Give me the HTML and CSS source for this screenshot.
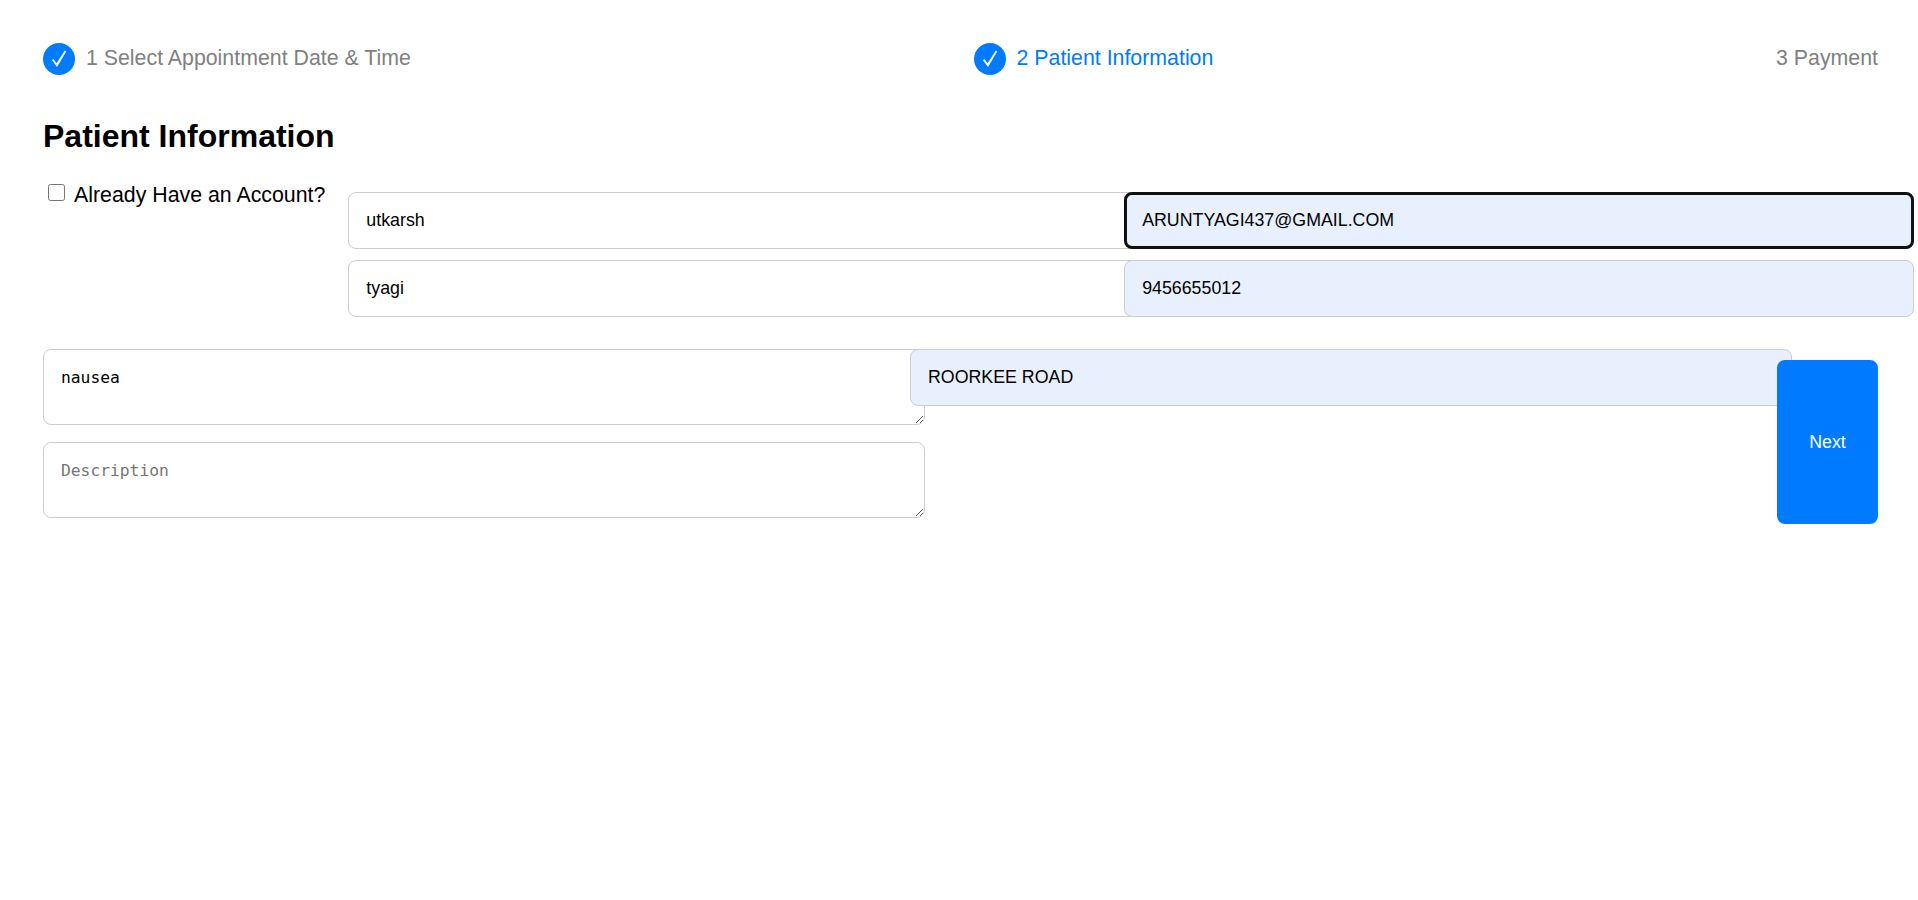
FILE: index.html
```html
<!DOCTYPE html>
<html>
<head>
    <title>Patient Information</title>
    <link rel="stylesheet" href="styles.css">
</head>
<body>
    <div class="steps">
        <div class="step">
            <span class="step-icon">
                <svg viewBox="0 0 32 32" width="32" height="32"><path d="M9 17.2 L10.4 16 L13.6 20.2 L21.8 7.6 L23.2 8.4 L14 24 Z" fill="#fff"/></svg>
            </span>
            <span class="step-label">1 Select Appointment Date &amp; Time</span>
        </div>
        <div class="step active">
            <span class="step-icon">
                <svg viewBox="0 0 32 32" width="32" height="32"><path d="M9 17.2 L10.4 16 L13.6 20.2 L21.8 7.6 L23.2 8.4 L14 24 Z" fill="#fff"/></svg>
            </span>
            <span class="step-label">2 Patient Information</span>
        </div>
        <div class="step"><span class="step-label">3 Payment</span></div>
    </div>

    <h2>Patient Information</h2>

    <form>
        <div class="account-row">
            <label class="account-check"><input type="checkbox"> <span class="account-text">Already Have an Account?</span></label>
            <div class="contact-grid">
                <input class="field" type="text" value="utkarsh" placeholder="First Name">
                <input class="field filled focused" type="text" value="ARUNTYAGI437@GMAIL.COM" placeholder="Email">
                <input class="field" type="text" value="tyagi" placeholder="Last Name">
                <input class="field filled" type="text" value="9456655012" placeholder="Phone">
            </div>
        </div>

        <div class="details-row">
            <div class="details-col">
                <textarea class="field note" placeholder="Reason">nausea</textarea>
                <textarea class="field note" placeholder="Description"></textarea>
            </div>
            <div>
                <input class="field filled" type="text" value="ROORKEE ROAD" placeholder="Address">
            </div>
            <button class="next" type="button">Next</button>
        </div>
    </form>
</body>
</html>
```

FILE: styles.css
```css
body { margin: 0; padding: 43px 40px 0 43px; font-family: "Liberation Sans", Arial, sans-serif; background: #fff; color: #000; }

.steps { display: flex; justify-content: space-between; align-items: center; height: 32px; }
.step { display: flex; align-items: center; gap: 11px; font-size: 21.33px; color: #808080; }
.step.active { color: #007bff; }
.step-label { margin-top: -2px; }
.step-icon { display: block; width: 32px; height: 32px; border-radius: 50%; background: #007bff; }
.step-icon svg { display: block; }

h2 { margin: 43px 0 0; font-size: 32px; line-height: 37px; font-weight: bold; }

.account-row { display: flex; align-items: flex-start; gap: 23px; margin-top: 27px; }
.account-check { display: flex; align-items: flex-start; gap: 9px; padding: 0 0 0 5px; font-size: 21.33px; line-height: 24px; white-space: nowrap; }
.account-check input { width: 17px; height: 17px; margin: 2px 0 0; }
.account-text { margin-top: 1px; }
.contact-grid { flex: 1; display: grid; grid-template-columns: 1fr 1fr; column-gap: 22px; row-gap: 11px; margin-top: 10px; }

.field { display: block; box-sizing: content-box; width: 100%; margin: 0; padding: 17px; border: 1px solid #ccc; border-radius: 8px; font-family: "Liberation Sans", Arial, sans-serif; font-size: 17.8px; line-height: 21px; background: #fff; color: #000; }
.field.filled { background: #e8f0fe; }
.field.focused { outline: 3px solid #101010; outline-offset: -3px; }
.note { height: 39px; padding-top: 18px; line-height: 19px; font-family: "DejaVu Sans Mono", monospace; font-size: 16.3px; }
.note::placeholder { color: #757575; }

.details-row { display: grid; grid-template-columns: 1fr 1fr 101px; column-gap: 21px; margin-top: 32px; }
.details-col { display: flex; flex-direction: column; gap: 17px; }

.next { align-self: start; height: 164px; margin-top: 11px; border: none; border-radius: 8px; background: #007bff; color: #fff; font-family: "Liberation Sans", Arial, sans-serif; font-size: 17.8px; }
```
